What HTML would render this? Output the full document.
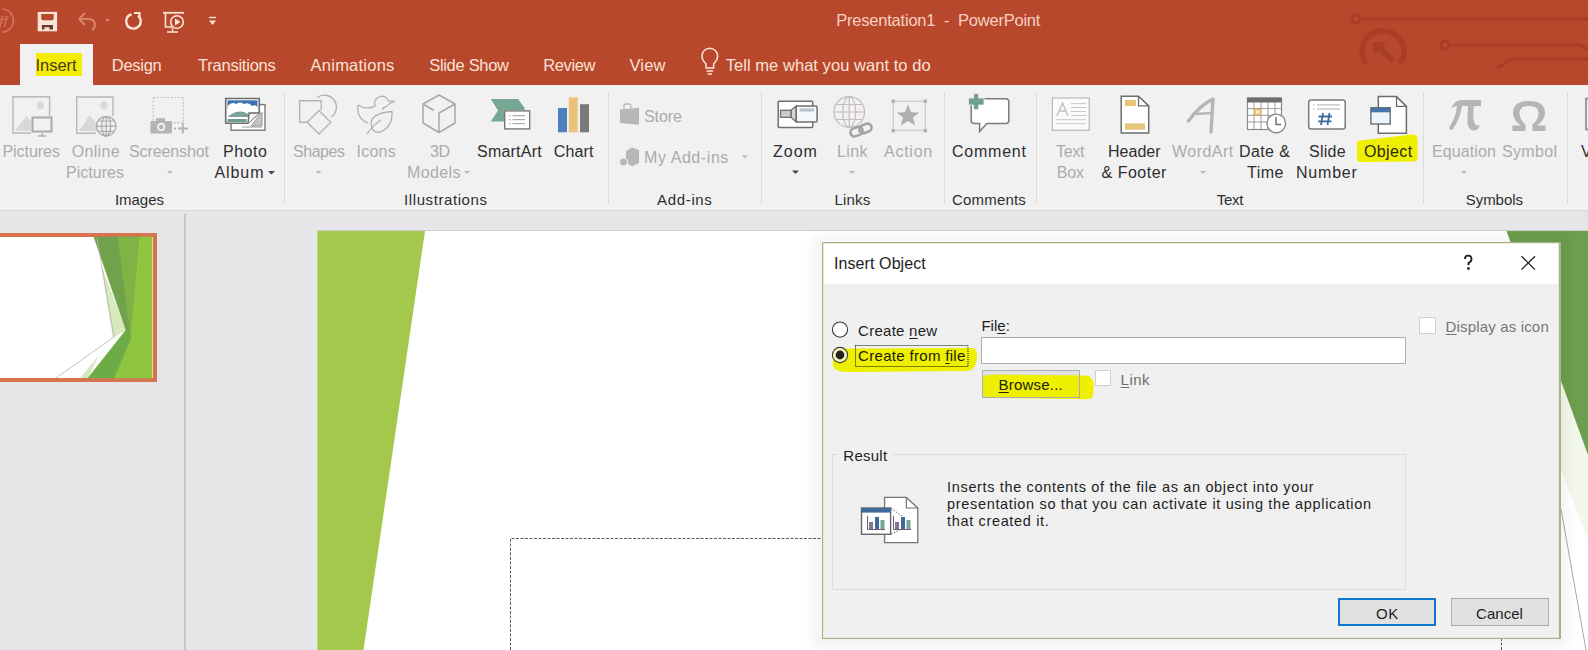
<!DOCTYPE html>
<html><head><meta charset="utf-8">
<style>
*{margin:0;padding:0;box-sizing:border-box}
html,body{width:1588px;height:650px;overflow:hidden;background:#e6e5e7;font-family:"Liberation Sans",sans-serif;position:relative}
.a{position:absolute}
.t{position:absolute;white-space:nowrap;line-height:1}
svg{position:absolute;overflow:visible}
</style></head>
<body>
<!-- title + tabs background -->
<div class="a" style="left:0;top:0;width:1588px;height:85px;background:#b8482b"></div>
<!-- ribbon -->
<div class="a" style="left:0;top:85px;width:1588px;height:125px;background:#f2f1f2"></div>
<div class="a" style="left:0;top:210px;width:1588px;height:1px;background:#d9d8da"></div>
<div class="a" style="left:12.5px;top:47px;width:1.5px;height:38px;background:#ad4329"></div>
<!-- active tab -->
<div class="a" style="left:20px;top:44px;width:73px;height:42px;background:#f2f1f2"></div>
<div class="a" style="left:36px;top:53px;width:45.5px;height:23px;background:#f2ec08"></div>

<!-- title bar decoration (circuit) -->
<svg style="left:0;top:0" width="1588" height="85">
 <g fill="none" stroke="#a83e24" stroke-width="3">
  <circle cx="1356" cy="19" r="4"/>
  <line x1="1360" y1="19" x2="1588" y2="19"/>
  <circle cx="1445" cy="45" r="4"/>
  <path d="M1449 45 L1580 45 L1588 50"/>
  <path d="M1497 68 L1512 59 L1588 59"/>
  <path d="M1366 64 A21 21 0 1 1 1400 64" stroke-width="5.5"/>
 </g>
 <path d="M1372 42 L1386 42 L1383 47 L1395 59 L1391 63 L1379 51 L1375 55 Z" fill="#a83e24"/>
</svg>

<!-- quick access toolbar -->
<svg style="left:0;top:0" width="230" height="42">
 <path d="M2 9 A11.5 11.5 0 0 1 2 32" fill="none" stroke="#d6735a" stroke-width="1.6"/>
 <text x="-1" y="27" font-family="Liberation Sans" font-size="15" fill="#d6735a" font-style="italic">ff</text>
 <rect x="37.7" y="11.9" width="19.4" height="19.4" fill="#fbe3d5"/>
 <path d="M41.2 14 H53.7 V18.5 Q53.7 20.2 52 20.2 H43 Q41.2 20.2 41.2 18.5 Z" fill="#b8482b"/>
 <path d="M41.9 25 H53 V29.6 H49.5 V27.2 H44.5 V29.6 H41.9 Z" fill="#6b3a2e"/>
 <path d="M79 19 L85 13 M79 19 L85 25 M79 19 H88 Q95 19 95 25 Q95 28 92 30" fill="none" stroke="#d9826a" stroke-width="2.2"/>
 <path d="M105 19 L110 19 L107.5 22 Z" fill="#d9826a"/>
 <path d="M131.5 14.25 A7.3 7.3 0 1 0 138.1 15.7" fill="none" stroke="#fbe3d5" stroke-width="2.4"/>
 <path d="M134 13 H139.5 V18.5" fill="none" stroke="#fbe3d5" stroke-width="2.1"/>
 <path d="M163 12.8 H184" stroke="#fbe3d5" stroke-width="1.8"/>
 <path d="M165.5 13 V27 H172" fill="none" stroke="#fbe3d5" stroke-width="1.6"/>
 <circle cx="177" cy="22" r="6.3" fill="none" stroke="#fbe3d5" stroke-width="1.6"/>
 <path d="M175 18.5 L180.5 22 L175 25.5 Z" fill="#fbe3d5"/>
 <path d="M167 32 H178 M172.5 28 V32" stroke="#fbe3d5" stroke-width="1.4"/>
 <path d="M209 17.5 H216" stroke="#fbe3d5" stroke-width="1.4"/>
 <path d="M209 20.5 L216 20.5 L212.5 25 Z" fill="#fbe3d5"/>
</svg>

<!-- lightbulb -->
<svg style="left:0;top:0" width="760" height="85">
 <path d="M706 68 V64 Q702 60 702 56 A7.8 7.8 0 0 1 717.6 56 Q717.6 60 713.6 64 V68 Z" fill="none" stroke="#fbe2d8" stroke-width="1.5"/>
 <path d="M706.5 71 H713 M707.5 74 H712" stroke="#fbe2d8" stroke-width="1.5"/>
</svg>

<svg style="left:0;top:0" width="1588" height="210">
 <!-- Pictures -->
 <g>
  <path d="M15 130.8 L26.5 116 L31.5 122 V130.8 Z" fill="#d8d8d8"/>
  <circle cx="40.4" cy="105.4" r="3.6" fill="#d8d8d8"/>
  <path d="M31 133 H13 V96.7 H49.6 V116" fill="none" stroke="#b8b8b8" stroke-width="1.4"/>
  <rect x="32.5" y="117.5" width="19" height="14" fill="#f2f1f2" stroke="#a9a9a9" stroke-width="2"/>
  <path d="M38 136 H46 M42 133 V136" stroke="#b0b0b0" stroke-width="1.4"/>
 </g>
 <!-- Online pictures -->
 <g>
  <path d="M79 131 L89.6 115 L97 124 V131 Z" fill="#d8d8d8"/>
  <circle cx="104" cy="105.4" r="3.6" fill="#d8d8d8"/>
  <path d="M96 133.3 H76.7 V97 H113 V116" fill="none" stroke="#b8b8b8" stroke-width="1.4"/>
  <circle cx="106.2" cy="126.2" r="9.8" fill="#f2f1f2" stroke="#acacac" stroke-width="1.4"/>
  <ellipse cx="106.2" cy="126.2" rx="4.5" ry="9.8" fill="none" stroke="#acacac" stroke-width="1.3"/>
  <path d="M96.5 126.2 H116 M98 121 H114.5 M98 131.4 H114.5 M106.2 116.4 V136" stroke="#acacac" stroke-width="1.2"/>
 </g>
 <!-- Screenshot -->
 <g>
  <rect x="153.2" y="97.5" width="30.2" height="25.1" fill="none" stroke="#c0c0c0" stroke-width="1.1" stroke-dasharray="2,1.5"/>
  <rect x="150.4" y="121" width="21.6" height="12.6" rx="1" fill="#b4b4b4"/>
  <rect x="156" y="118.2" width="9" height="4" fill="#b4b4b4"/>
  <circle cx="161.2" cy="127" r="4.2" fill="#f2f1f2"/>
  <circle cx="161.2" cy="127" r="2.3" fill="#b4b4b4"/>
  <path d="M174 128.4 H176 M178 128.4 H188 M182.8 123 V133.5" stroke="#b4b4b4" stroke-width="2"/>
 </g>
 <!-- Photo album -->
 <g>
  <rect x="231" y="104.6" width="34" height="25.6" fill="#fff" stroke="#7a7a7a" stroke-width="1.4"/>
  <path d="M242 127 H262 M251 126 L262 112 V126 Z" fill="#c2c2c2" stroke="#9a9a9a" stroke-width="1"/>
  <path d="M225.7 98.5 H259.3 V113 L248 123.3 H225.7 Z" fill="#fff" stroke="#6c6c6c" stroke-width="1.6"/>
  <rect x="227.5" y="100.3" width="30" height="8.5" fill="#3f72b0"/>
  <path d="M227.5 106 Q232 101.5 236 104 Q240 101 244 104 Q249 102 252 106 Q255 104 257.5 107 V110 H227.5 Z" fill="#fff"/>
  <path d="M227.5 117 Q236 110 244 112 L250 115 V117 Z" fill="#7ba39b"/>
  <rect x="227.5" y="119" width="19" height="3" fill="#6f9b95"/>
  <path d="M248 123.3 L249 113 H259.3" fill="#f2f2f2" stroke="#6c6c6c" stroke-width="1.4"/>
 </g>
 <!-- Shapes -->
 <g fill="none" stroke="#b3b3b3" stroke-width="1.4">
  <path d="M307 122.3 H299.6 V100.8 H321.2 V110"/>
  <path d="M317 97.5 A11 11 0 0 1 331.5 117"/>
  <path d="M319 110.5 L330.8 122.3 L319 134 L307.2 122.3 Z"/>
 </g>
 <!-- Icons -->
 <g fill="none" stroke="#b3b3b3" stroke-width="1.3" stroke-linejoin="round">
  <path d="M375 106 A6.5 6.5 0 1 1 388.5 101 L394.5 101.5 L389 104 Q387 107 383 108 V110"/>
  <path d="M358 105 Q364 109 371 107.5 Q374 107 375 106"/>
  <path d="M358 105 Q356 118 368 123"/>
  <path d="M371 123 Q372 113 392 111.5 Q393 127 380 132 Q372 134 371 123 Z"/>
  <path d="M367 134 Q373 125 381 120"/>
 </g>
 <!-- 3D Models -->
 <g fill="none" stroke="#a9a9a9" stroke-width="1.5" stroke-linejoin="round">
  <path d="M439 95 L455 104 V123 L439 132.5 L423 123 V104 Z"/>
  <path d="M455 104 L439 113 V132.5 M423 104 L434 110.5"/>
 </g>
 <!-- SmartArt -->
 <g>
  <path d="M490.8 99 H518 L524.6 108 V110 H504 V121.5 H490.8 L498 110.4 Z" fill="#76a793"/>
  <rect x="504.7" y="110.9" width="25" height="18" fill="#fff" stroke="#787878" stroke-width="1.4"/>
  <path d="M509 115.7 H510.5 M512.5 115.7 H525 M509 119.7 H510.5 M512.5 119.7 H525 M509 123.7 H510.5 M512.5 123.7 H525" stroke="#999" stroke-width="1"/>
 </g>
 <!-- Chart -->
 <rect x="558" y="108" width="9" height="24.3" fill="#4e7fbe"/>
 <rect x="568.8" y="97.3" width="9" height="35" fill="#ebc27a"/>
 <rect x="580" y="104.2" width="9" height="28.1" fill="#7a7a7a"/>
 <!-- Store -->
 <g fill="#b7b7b7">
  <path d="M620 109.5 L639 107.7 V124.7 L620 123 Z"/>
  <path d="M624 109 V105.5 Q624 104 626 104 H629 Q631 104 631 106 V108.5" fill="none" stroke="#b7b7b7" stroke-width="1.3"/>
 </g>
 <!-- My Add-ins -->
 <g fill="#b7b7b7">
  <path d="M626 151 L632 147.5 L639 150 V163 L632 166.3 L626 163 Z"/>
  <circle cx="623.5" cy="162" r="4" fill="#b7b7b7" stroke="#f2f1f2" stroke-width="1.2"/>
 </g>
 <!-- Zoom -->
 <g>
  <rect x="778.2" y="101.2" width="34.5" height="26.2" rx="1" fill="#fff" stroke="#6f6f6f" stroke-width="1.5"/>
  <path d="M791 110.3 L796.2 106 V122 L791 117.3 Z" fill="#d5d9dc" stroke="#6f6f6f" stroke-width="1.3"/>
  <rect x="780.5" y="110.3" width="10.4" height="7" fill="#c9cdd0" stroke="#6f6f6f" stroke-width="1.3"/>
  <rect x="796.2" y="106" width="20.9" height="16" rx="1.5" fill="#f4f8fa" stroke="#6f6f6f" stroke-width="1.5"/>
  <rect x="799.5" y="108.5" width="14.5" height="3" fill="#b5c3c8"/>
 </g>
 <!-- Link -->
 <g fill="none" stroke="#c4bcc0" stroke-width="1.2">
  <circle cx="849.2" cy="112" r="15.3"/>
  <ellipse cx="849.2" cy="112" rx="6.5" ry="15.3"/>
  <path d="M834 112 H864.5 M836 104.5 H862.5 M836 119.5 H862.5 M849.2 96.7 V127.3"/>
 </g>
 <g fill="none" stroke="#a3a3a3" stroke-width="2.6" transform="rotate(-20 861 130)">
  <rect x="850" y="126" width="12.5" height="8" rx="4" fill="#f2f1f2"/>
  <rect x="859.5" y="126" width="12.5" height="8" rx="4"/>
 </g>
 <!-- Action -->
 <g>
  <rect x="893.2" y="101.2" width="32" height="29" fill="none" stroke="#c4c4c4" stroke-width="1"/>
  <rect x="891.5" y="99.5" width="3.4" height="3.4" fill="#b0b0b0"/>
  <rect x="923.6" y="99.5" width="3.4" height="3.4" fill="#b0b0b0"/>
  <rect x="891.5" y="129" width="3.4" height="3.4" fill="#b0b0b0"/>
  <rect x="923.6" y="129" width="3.4" height="3.4" fill="#b0b0b0"/>
  <path d="M908 104.5 L911.2 112.3 L919.3 112.6 L913 117.6 L915.2 125.6 L908 121 L900.8 125.6 L903 117.6 L896.7 112.6 L904.8 112.3 Z" fill="#b0b0b0"/>
 </g>
 <!-- Comment -->
 <g>
  <path d="M974 98.8 H1005.8 Q1008.8 98.8 1008.8 101.8 V120.6 Q1008.8 123.6 1005.8 123.6 H986.8 L979.6 131.6 V123.6 H974.2 Q971.2 123.6 971.2 120.6 V101.8 Q971.2 98.8 974 98.8 Z" fill="#fff" stroke="#7b7b7b" stroke-width="1.5"/>
  <path d="M968.4 98 H973.6 V93.6 H978.6 V98 H984 V105 H978.6 V109.5 H973.6 V105 H968.4 Z" fill="#70a18f" stroke="#f2f1f2" stroke-width="0.8"/>
 </g>
 <!-- Text Box -->
 <g>
  <rect x="1052.4" y="98" width="36.8" height="32.2" fill="#fbfbfb" stroke="#bdbdbd" stroke-width="1.3"/>
  <path d="M1057 116 L1062.5 103 L1068 116 M1059 111 H1066" fill="none" stroke="#c0c0c0" stroke-width="1.4"/>
  <path d="M1071 103.6 H1086 M1071 107.5 H1086 M1071 111.5 H1086 M1071 115.5 H1086 M1055.8 119.7 H1086 M1055.8 123.7 H1086" stroke="#c8c8c8" stroke-width="1"/>
 </g>
 <!-- Header & Footer -->
 <g>
  <path d="M1121.2 96.2 H1138.5 L1148.7 105.9 V133.1 H1121.2 Z" fill="#fff" stroke="#6d6d6d" stroke-width="1.5"/>
  <path d="M1138.5 96.2 V105.9 H1148.7" fill="none" stroke="#6d6d6d" stroke-width="1.3"/>
  <rect x="1125" y="100" width="11" height="6" fill="#e6c478"/>
  <rect x="1125" y="123.4" width="20" height="6.3" fill="#e6c478"/>
 </g>
 <!-- WordArt -->
 <path d="M1188.5 121 Q1199 106 1213 99 L1211 132" fill="none" stroke="#b5b5b5" stroke-width="3.4" stroke-linecap="round" stroke-linejoin="round"/>
 <path d="M1196 114 L1211.5 113" fill="none" stroke="#b5b5b5" stroke-width="2.4"/>
 <!-- Date & Time -->
 <g>
  <rect x="1247.5" y="98" width="34" height="31.5" fill="#fff" stroke="#8a8a8a" stroke-width="1.2"/>
  <rect x="1247" y="97.7" width="34.7" height="4.8" fill="#6d6d6d"/>
  <path d="M1254 102.5 V129.5 M1261 102.5 V129.5 M1268 102.5 V129.5 M1275 102.5 V129.5 M1247.5 108.6 H1281.5 M1247.5 115.3 H1281.5 M1247.5 122 H1281.5" stroke="#9a9a9a" stroke-width="1"/>
  <rect x="1254.8" y="109.4" width="5.5" height="5.2" fill="#fbe7bd" stroke="#e3b458" stroke-width="1.2"/>
  <circle cx="1276.3" cy="123.4" r="9.3" fill="#fff" stroke="#8a8a8a" stroke-width="1.4"/>
  <path d="M1276 117 V124.5 H1281" fill="none" stroke="#6d6d6d" stroke-width="1.4"/>
 </g>
 <!-- Slide Number -->
 <g>
  <rect x="1308.7" y="100" width="36.5" height="29" rx="2.5" fill="#fff" stroke="#7b7b7b" stroke-width="1.5"/>
  <path d="M1313 104.9 H1314.5 M1317 104.9 H1340 M1313 109 H1314.5 M1317 109 H1340" stroke="#b0b0b0" stroke-width="1"/>
  <path d="M1323 113 L1321 125 M1329.5 113 L1327.5 125 M1318.5 116.5 H1332 M1318 121.3 H1331.5" stroke="#3c6d9c" stroke-width="1.8"/>
 </g>
 <!-- Object -->
 <g>
  <path d="M1378.3 96.6 H1396.5 L1406.4 106.4 V133.3 H1378.3 Z" fill="#fff" stroke="#6d6d6d" stroke-width="1.5"/>
  <path d="M1396.5 96.6 V106.4 H1406.4" fill="none" stroke="#6d6d6d" stroke-width="1.3"/>
  <rect x="1370.9" y="107.7" width="19.3" height="16.3" fill="#edf5fa" stroke="#6d6d6d" stroke-width="1.4"/>
  <rect x="1370.9" y="107.7" width="19.3" height="4.6" fill="#4a74a6"/>
 </g>
 <!-- Pi -->
 <path d="M1452 107 Q1455 100 1462 100 H1481 V106 H1474 Q1472 118 1475 124 Q1477 127 1480 125 Q1478 131 1473 130.5 Q1466 129 1467.5 117 L1468 106 H1462 Q1460 120 1452 130 Q1448 130 1450 126 Q1456 117 1457 106 Q1454 106 1452 108 Z" fill="#b5b5b5"/>
 <!-- Omega -->
 <path d="M1512.5 131 V125.5 H1521 Q1513 120 1513 113 Q1513 101 1529 101 Q1545 101 1545 113 Q1545 120 1537 125.5 H1545.5 V131 H1532.5 V124.5 Q1538.5 120 1538.5 113 Q1538.5 106 1529 106 Q1519.5 106 1519.5 113 Q1519.5 120 1525.5 124.5 V131 Z" fill="#b5b5b5"/>
 <!-- partial icon at right edge -->
 <path d="M1590 98.5 H1586 V129.5 H1590" fill="none" stroke="#7a7a7a" stroke-width="1.4"/>
 <!-- dropdown arrows -->
 <g fill="#b9b9b9">
  <path d="M167 171 H173 L170 174 Z"/>
  <path d="M315.5 171 H321.5 L318.5 174 Z"/>
  <path d="M464 171 H470 L467 174 Z"/>
  <path d="M741.6 155.5 H747.6 L744.6 158.5 Z"/>
  <path d="M849 171 H855 L852 174 Z"/>
  <path d="M1200 171 H1206 L1203 174 Z"/>
  <path d="M1460.8 171 H1466.8 L1463.8 174 Z"/>
 </g>
 <g fill="#444">
  <path d="M268 171 H275 L271.5 174.5 Z"/>
  <path d="M792 170.5 H799 L795.5 174 Z"/>
 </g>
</svg>


<!-- ribbon separators -->
<div class="a" style="left:284px;top:92px;width:1px;height:112px;background:#dcdbdc"></div>
<div class="a" style="left:608px;top:92px;width:1px;height:112px;background:#dcdbdc"></div>
<div class="a" style="left:761px;top:92px;width:1px;height:112px;background:#dcdbdc"></div>
<div class="a" style="left:944px;top:92px;width:1px;height:112px;background:#dcdbdc"></div>
<div class="a" style="left:1036px;top:92px;width:1px;height:112px;background:#dcdbdc"></div>
<div class="a" style="left:1423px;top:92px;width:1px;height:112px;background:#dcdbdc"></div>
<div class="a" style="left:1567px;top:92px;width:1px;height:112px;background:#dcdbdc"></div>

<!-- thumbnails pane -->
<div class="a" style="left:184px;top:214px;width:1.5px;height:436px;background:#c6c5c7"></div>
<div class="a" style="left:0;top:233px;width:157px;height:149px;background:#d7744f"></div>
<div class="a" style="left:0;top:237px;width:153px;height:141px;background:#f6f0a8"></div>
<svg style="left:0;top:237px" width="152" height="141">
 <rect x="0" y="0" width="152" height="141" fill="#fff"/>
 <polygon points="101,28 126,93 113,101 98,120 88,141 80,141 113,101" fill="#d6eabb"/>
 <polygon points="94,0 135,0 131,101 126,93" fill="#70a14b" stroke="#70a14b" stroke-width="0.6"/>
 <polygon points="118,0 140,0 131,101" fill="#7fb346" stroke="#7fb346" stroke-width="0.6"/>
 <polygon points="140,0 152,0 152,141 114,141 131,101" fill="#8fc63f" stroke="#8fc63f" stroke-width="0.6"/>
 <polygon points="88,141 126,93 131,101 114,141" fill="#6dab46" stroke="#6dab46" stroke-width="0.6"/>
 <path d="M97 1 L114 100 L56 141" fill="none" stroke="#b2b2b2" stroke-width="0.8"/>
</svg>

<!-- slide -->
<div class="a" style="left:317px;top:230px;width:1271px;height:420px;background:#fff"></div>
<div class="a" style="left:317px;top:230px;width:1271px;height:1px;background:#cfcfcf"></div>
<svg style="left:0;top:0" width="1588" height="650">
 <polygon points="317.3,231 425,231 363.5,650 317.3,650" fill="#a3c84b"/>
 <polygon points="1561,378 1588,455 1588,540 1561,470" fill="#f3f7ec"/>
 <polygon points="1506.5,231 1588,231 1588,455" fill="#6c9e4e"/>
 <line x1="1561" y1="509" x2="1586" y2="650" stroke="#a8a8a8" stroke-width="1"/>
 <path d="M510.5 650 V538.5 H822" fill="none" stroke="#5a5a5a" stroke-width="1" stroke-dasharray="3,1.5"/>
 <path d="M1501.5 638 V650" fill="none" stroke="#5a5a5a" stroke-width="1" stroke-dasharray="3,1.5"/>
</svg>

<!-- dialog shadow -->
<div class="a" style="left:812px;top:236px;width:757px;height:412px;background:rgba(0,0,0,0.04);border-radius:6px;filter:blur(4px)"></div>
<!-- dialog -->
<div class="a" style="left:822px;top:242px;width:738.5px;height:397px;background:#a9b18a"></div>
<div class="a" style="left:823px;top:243px;width:736px;height:395px;background:#e6ebd6"></div>
<div class="a" style="left:824px;top:244px;width:734px;height:393px;background:#f0f0f0"></div>
<div class="a" style="left:824px;top:244px;width:734px;height:40px;background:#fff"></div>
<!-- "?" and X -->
<svg style="left:0;top:0" width="1588" height="650">
 <path d="M1465 259 Q1465 255.6 1468 255.6 Q1471.5 255.6 1471.5 259 Q1471.5 261.5 1468.5 263 V265.3" fill="none" stroke="#222" stroke-width="1.9"/>
 <rect x="1467.2" y="267.2" width="2.5" height="2.5" fill="#222"/>
 <path d="M1521.5 256.2 L1535 269.6 M1535 256.2 L1521.5 269.6" stroke="#222" stroke-width="1.3"/>
</svg>

<div class="a" style="left:981.5px;top:370px;width:98.5px;height:27.7px;background:#e1e1e1"></div>
<!-- highlights (yellow marker) -->
<svg style="left:0;top:0" width="1588" height="650">
 <path d="M833 360 Q833 349 845 348.5 L972 348 Q978 349 977 358 Q976 370 968 371 L850 372 Q835 372.5 833 366 Z" fill="#eef000"/>
 <path d="M982 376 Q990 374 1000 374.5 L1085 375.5 Q1094 376 1093.8 386 L1093 396 Q1092 399.5 1085 399.2 L990 398 Q982 397 982 392 Z" fill="#eef000"/>
 <path d="M1357 141 L1412 134.5 Q1417 134 1417.5 139 L1417.5 159 Q1417 161.5 1413 161.5 L1360 162 Q1357 162 1357 159 Z" fill="#eef000"/>
</svg>

<!-- radios -->
<svg style="left:0;top:0" width="1588" height="650">
 <circle cx="840" cy="329.6" r="7.6" fill="#fff" stroke="#3a3a3a" stroke-width="1.1"/>
 <circle cx="840" cy="355" r="7.6" fill="#f8f8c0" stroke="#3a3a3a" stroke-width="1.1"/>
 <circle cx="840" cy="355" r="4.4" fill="#222"/>
 <rect x="855.5" y="345.5" width="112.5" height="21" fill="none" stroke="#111" stroke-width="1" stroke-dasharray="1,1"/>
</svg>

<!-- file textbox -->
<div class="a" style="left:980.5px;top:337.4px;width:425.5px;height:26.4px;background:#fff;border:1.3px solid #adadad"></div>
<!-- browse button -->
<div class="a" style="left:981.5px;top:370px;width:98.5px;height:27.7px;border:1.3px solid #adadad;background:transparent"></div>
<!-- link checkbox -->
<div class="a" style="left:1094.6px;top:370.3px;width:16.2px;height:16px;background:#fff;border:1px solid #d0d0d0"></div>
<!-- display as icon checkbox -->
<div class="a" style="left:1419px;top:317.2px;width:16.7px;height:16.7px;background:#fff;border:1px solid #cfcfcf"></div>

<!-- result group box -->
<div class="a" style="left:831.9px;top:453.5px;width:574px;height:136.5px;border:1px solid #dcdcdc"></div>
<div class="a" style="left:838px;top:446px;width:54px;height:16px;background:#f0f0f0"></div>
<!-- result icon -->
<svg style="left:0;top:0" width="1588" height="650">
 <path d="M884.6 497.4 H906.3 L917.8 508 V542.6 H884.6 Z" fill="#fff" stroke="#757575" stroke-width="1.3"/>
 <path d="M906.3 497.4 V508 H917.8" fill="none" stroke="#757575" stroke-width="1.2"/>
 <rect x="861.5" y="508" width="29.1" height="26.3" fill="#fff" stroke="#666" stroke-width="1.4"/>
 <rect x="861.5" y="508" width="29.1" height="4.6" fill="#3f6a9c"/>
 <path d="M867.5 516 V529.5 H885" fill="none" stroke="#6a5a7a" stroke-width="1"/>
 <rect x="869" y="522" width="4" height="7" fill="#8a6f8f"/>
 <rect x="875" y="517" width="4" height="12" fill="#3f6a9c"/>
 <rect x="880.5" y="520" width="4" height="9" fill="#7aa596"/>
 <path d="M893.5 516 V529.5 H911" fill="none" stroke="#6a5a7a" stroke-width="1"/>
 <rect x="895" y="522" width="4" height="7" fill="#8a6f8f"/>
 <rect x="901" y="517" width="4" height="12" fill="#3f6a9c"/>
 <rect x="906.5" y="520" width="4" height="9" fill="#7aa596"/>
 <path d="M891 508.5 L902 516 M891 534 L900 530" fill="none" stroke="#666" stroke-width="1" stroke-dasharray="1.5,1.5"/>
</svg>

<!-- OK / Cancel -->
<div class="a" style="left:1337.7px;top:598.4px;width:98px;height:27.6px;background:#e1e1e1;border:2px solid #0e78d0"></div>
<div class="a" style="left:1450.8px;top:598.4px;width:98.6px;height:27.6px;background:#e1e1e1;border:1.3px solid #adadad"></div>

<div class="t" style="left:836.3px;top:12.0px;font-size:16.5px;color:#f5d0c3;letter-spacing:-0.22px;">Presentation1&nbsp; -&nbsp; PowerPoint</div>
<div class="t" style="left:35.5px;top:56.5px;font-size:16.5px;color:#4a3a10;letter-spacing:-0.03px;">Insert</div>
<div class="t" style="left:111.8px;top:56.5px;font-size:16.5px;color:#fbe2d8;letter-spacing:-0.28px;">Design</div>
<div class="t" style="left:198.0px;top:56.5px;font-size:16.5px;color:#fbe2d8;letter-spacing:-0.23px;">Transitions</div>
<div class="t" style="left:310.6px;top:56.5px;font-size:16.5px;color:#fbe2d8;letter-spacing:0.23px;">Animations</div>
<div class="t" style="left:429.2px;top:56.5px;font-size:16.5px;color:#fbe2d8;letter-spacing:-0.30px;">Slide Show</div>
<div class="t" style="left:543.3px;top:56.5px;font-size:16.5px;color:#fbe2d8;letter-spacing:-0.40px;">Review</div>
<div class="t" style="left:629.5px;top:56.5px;font-size:16.5px;color:#fbe2d8;letter-spacing:0.13px;">View</div>
<div class="t" style="left:725.7px;top:56.5px;font-size:16.5px;color:#fbe2d8;letter-spacing:0.05px;">Tell me what you want to do</div>
<div class="t" style="left:2.4px;top:143.5px;font-size:16px;color:#ababab;letter-spacing:-0.03px;">Pictures</div>
<div class="t" style="left:71.7px;top:143.5px;font-size:16px;color:#ababab;letter-spacing:0.33px;">Online</div>
<div class="t" style="left:66.0px;top:165.2px;font-size:16px;color:#ababab;letter-spacing:0.02px;">Pictures</div>
<div class="t" style="left:129.0px;top:143.5px;font-size:16px;color:#ababab;letter-spacing:-0.10px;">Screenshot</div>
<div class="t" style="left:223.0px;top:143.5px;font-size:16px;color:#2e2e2e;letter-spacing:0.52px;">Photo</div>
<div class="t" style="left:214.4px;top:165.2px;font-size:16px;color:#2e2e2e;letter-spacing:0.95px;">Album</div>
<div class="t" style="left:115.0px;top:191.7px;font-size:15px;color:#2e2e2e;letter-spacing:-0.05px;">Images</div>
<div class="t" style="left:293.0px;top:143.5px;font-size:16px;color:#ababab;letter-spacing:-0.46px;">Shapes</div>
<div class="t" style="left:356.5px;top:143.5px;font-size:16px;color:#ababab;letter-spacing:0.23px;">Icons</div>
<div class="t" style="left:430.0px;top:143.5px;font-size:16px;color:#ababab;letter-spacing:-0.42px;">3D</div>
<div class="t" style="left:407.0px;top:165.2px;font-size:16px;color:#ababab;letter-spacing:0.39px;">Models</div>
<div class="t" style="left:477.0px;top:143.5px;font-size:16px;color:#2e2e2e;letter-spacing:0.22px;">SmartArt</div>
<div class="t" style="left:553.7px;top:143.5px;font-size:16px;color:#2e2e2e;letter-spacing:0.14px;">Chart</div>
<div class="t" style="left:404.1px;top:191.7px;font-size:15px;color:#2e2e2e;letter-spacing:0.58px;">Illustrations</div>
<div class="t" style="left:644.0px;top:108.9px;font-size:16px;color:#ababab;letter-spacing:-0.11px;">Store</div>
<div class="t" style="left:644.0px;top:150.0px;font-size:16px;color:#ababab;letter-spacing:0.58px;">My Add-ins</div>
<div class="t" style="left:657.1px;top:191.7px;font-size:15px;color:#2e2e2e;letter-spacing:0.65px;">Add-ins</div>
<div class="t" style="left:773.0px;top:143.5px;font-size:16px;color:#2e2e2e;letter-spacing:1.00px;">Zoom</div>
<div class="t" style="left:837.0px;top:143.5px;font-size:16px;color:#ababab;letter-spacing:0.39px;">Link</div>
<div class="t" style="left:884.0px;top:143.5px;font-size:16px;color:#ababab;letter-spacing:0.74px;">Action</div>
<div class="t" style="left:834.6px;top:191.7px;font-size:15px;color:#2e2e2e;letter-spacing:0.15px;">Links</div>
<div class="t" style="left:952.0px;top:143.5px;font-size:16px;color:#2e2e2e;letter-spacing:0.77px;">Comment</div>
<div class="t" style="left:952.1px;top:191.7px;font-size:15px;color:#2e2e2e;letter-spacing:0.16px;">Comments</div>
<div class="t" style="left:1056.0px;top:143.5px;font-size:16px;color:#ababab;letter-spacing:-0.26px;">Text</div>
<div class="t" style="left:1056.7px;top:165.2px;font-size:16px;color:#ababab;letter-spacing:-0.12px;">Box</div>
<div class="t" style="left:1108.0px;top:143.5px;font-size:16px;color:#2e2e2e;letter-spacing:0.02px;">Header</div>
<div class="t" style="left:1101.5px;top:165.2px;font-size:16px;color:#2e2e2e;letter-spacing:0.51px;">&amp; Footer</div>
<div class="t" style="left:1172.0px;top:143.5px;font-size:16px;color:#ababab;letter-spacing:0.48px;">WordArt</div>
<div class="t" style="left:1239.0px;top:143.5px;font-size:16px;color:#2e2e2e;letter-spacing:0.40px;">Date &amp;</div>
<div class="t" style="left:1247.0px;top:165.2px;font-size:16px;color:#2e2e2e;letter-spacing:0.49px;">Time</div>
<div class="t" style="left:1309.0px;top:143.5px;font-size:16px;color:#2e2e2e;letter-spacing:0.27px;">Slide</div>
<div class="t" style="left:1296.0px;top:165.2px;font-size:16px;color:#2e2e2e;letter-spacing:0.79px;">Number</div>
<div class="t" style="left:1364.0px;top:143.5px;font-size:16px;color:#2a2a10;letter-spacing:0.38px;">Object</div>
<div class="t" style="left:1216.8px;top:191.7px;font-size:15px;color:#2e2e2e;letter-spacing:-0.28px;">Text</div>
<div class="t" style="left:1432.0px;top:143.5px;font-size:16px;color:#ababab;letter-spacing:0.09px;">Equation</div>
<div class="t" style="left:1502.0px;top:143.5px;font-size:16px;color:#ababab;letter-spacing:0.34px;">Symbol</div>
<div class="t" style="left:1465.8px;top:191.7px;font-size:15px;color:#2e2e2e;letter-spacing:-0.06px;">Symbols</div>
<div class="t" style="left:1581.0px;top:143.5px;font-size:16px;color:#2e2e2e;letter-spacing:0.00px;">V</div>
<div class="t" style="left:834.0px;top:255.5px;font-size:16px;color:#1e1e1e;letter-spacing:0.09px;">Insert Object</div>
<div class="t" style="left:858.1px;top:323.1px;font-size:15px;color:#1e1e1e;letter-spacing:0.26px;">Create <span style="text-decoration:underline;text-underline-offset:1.5px">n</span>ew</div>
<div class="t" style="left:858.1px;top:348.3px;font-size:15px;color:#20200a;letter-spacing:0.31px;">Create from <span style="text-decoration:underline;text-underline-offset:1.5px">f</span>ile</div>
<div class="t" style="left:981.4px;top:317.6px;font-size:15px;color:#1e1e1e;letter-spacing:0.03px;">Fil<span style="text-decoration:underline;text-underline-offset:1.5px">e</span>:</div>
<div class="t" style="left:998.6px;top:377.3px;font-size:15px;color:#20200a;letter-spacing:0.20px;"><span style="text-decoration:underline;text-underline-offset:1.5px">B</span>rowse...</div>
<div class="t" style="left:1120.6px;top:371.5px;font-size:15px;color:#6e6e6e;letter-spacing:0.44px;"><span style="text-decoration:underline;text-underline-offset:1.5px">L</span>ink</div>
<div class="t" style="left:1445.6px;top:319.1px;font-size:15px;color:#767676;letter-spacing:0.16px;"><span style="text-decoration:underline;text-underline-offset:1.5px">D</span>isplay as icon</div>
<div class="t" style="left:843.3px;top:447.5px;font-size:15px;color:#1e1e1e;letter-spacing:0.26px;">Result</div>
<div class="t" style="left:947.1px;top:479.7px;font-size:14.5px;color:#1e1e1e;letter-spacing:0.65px;">Inserts the contents of the file as an object into your</div>
<div class="t" style="left:947.1px;top:496.8px;font-size:14.5px;color:#1e1e1e;letter-spacing:0.66px;">presentation so that you can activate it using the application</div>
<div class="t" style="left:947.1px;top:513.8px;font-size:14.5px;color:#1e1e1e;letter-spacing:0.65px;">that created it.</div>
<div class="t" style="left:1376.1px;top:605.9px;font-size:15px;color:#1e1e1e;letter-spacing:0.46px;">OK</div>
<div class="t" style="left:1476.1px;top:605.9px;font-size:15px;color:#1e1e1e;letter-spacing:0.02px;">Cancel</div>
</body></html>
